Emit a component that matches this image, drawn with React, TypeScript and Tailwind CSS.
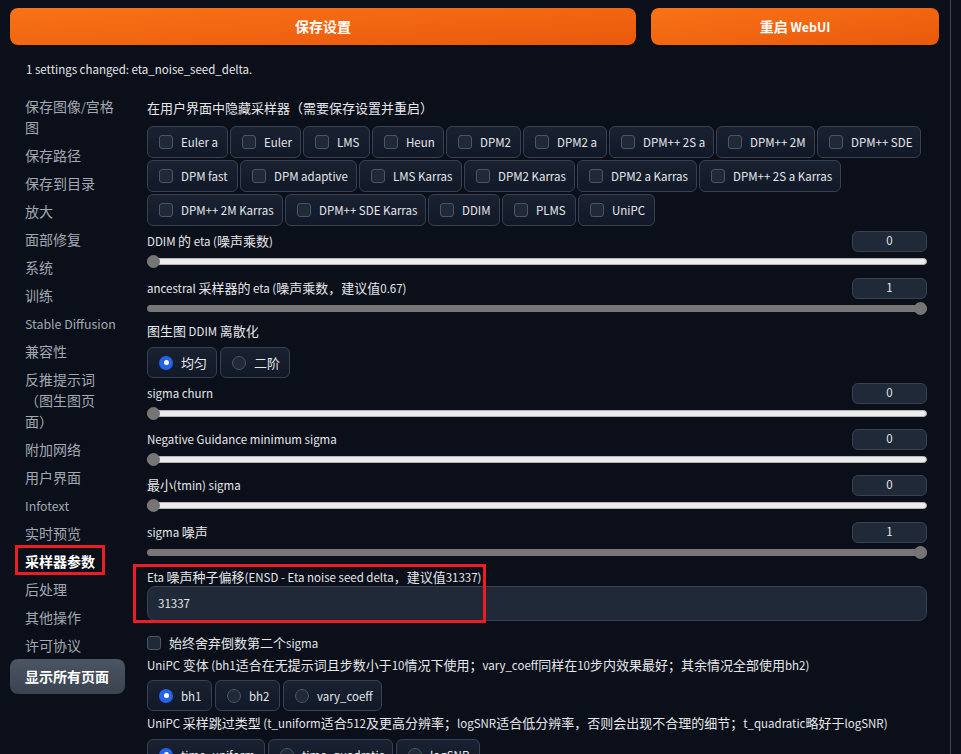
import { ReactNode } from "react";

const sidebarItems = [
  "保存图像/宫格图",
  "保存路径",
  "保存到目录",
  "放大",
  "面部修复",
  "系统",
  "训练",
  "Stable Diffusion",
  "兼容性",
  "反推提示词（图生图页面）",
  "附加网络",
  "用户界面",
  "Infotext",
  "实时预览",
  "采样器参数",
  "后处理",
  "其他操作",
  "许可协议",
];

const samplerRows: [string, number][][] = [
  [["Euler a", 81], ["Euler", 71], ["LMS", 67], ["Heun", 72], ["DPM2", 75], ["DPM2 a", 84], ["DPM++ 2S a", 105], ["DPM++ 2M", 99], ["DPM++ SDE", 104]],
  [["DPM fast", 91], ["DPM adaptive", 117], ["LMS Karras", 103], ["DPM2 Karras", 111], ["DPM2 a Karras", 120], ["DPM++ 2S a Karras", 142]],
  [["DPM++ 2M Karras", 136], ["DPM++ SDE Karras", 141], ["DDIM", 72], ["PLMS", 74], ["UniPC", 77]],
];

const CJK = /([\u2e80-\u9fff\uff00-\uffef]+)/;

// latin glyphs of the CJK font run large, so latin runs get a smaller size
function T({ children }: { children: string }) {
  const parts = children.split(CJK).filter((p) => p !== "");
  return (
    <>
      {parts.map((p, i) =>
        CJK.test(p) ? (
          <span key={i}>{p}</span>
        ) : (
          <span key={i} className="text-[0.885em] leading-none">{p}</span>
        )
      )}
    </>
  );
}

function CheckBox() {
  return <span className="w-[14px] h-[14px] shrink-0 rounded-[3px] border border-[#4b5563] bg-[#1f2937]" />;
}

function RadioDot({ checked }: { checked?: boolean }) {
  if (checked) {
    return (
      <span className="w-[14px] h-[14px] shrink-0 rounded-full bg-[#2563eb] flex items-center justify-center">
        <span className="w-[5px] h-[5px] rounded-full bg-white" />
      </span>
    );
  }
  return <span className="w-[14px] h-[14px] shrink-0 rounded-full border border-[#4b5563] bg-[#1f2937]" />;
}

function Chip({ w, h = "h-[32px]", children }: { w: number; h?: string; children: ReactNode }) {
  return (
    <label
      className={`${h} flex items-center gap-[8px] pl-[11px] rounded-md border border-[#374151] bg-gradient-to-t from-[#111827] to-[#1a2130] text-[13px] text-[#e5e7eb] whitespace-nowrap`}
      style={{ width: w }}
    >
      {children}
    </label>
  );
}

function RadioRow({ items, selected }: { items: [string, number][]; selected: number }) {
  return (
    <div className="flex gap-[3px]">
      {items.map(([label, w], i) => (
        <Chip key={label} w={w} h="h-[31px]">
          <RadioDot checked={i === selected} />
          <span><T>{label}</T></span>
        </Chip>
      ))}
    </div>
  );
}

function Label({ text, className = "" }: { text: string; className?: string }) {
  return (
    <div className={`h-[20px] leading-[20px] text-[13px] text-[#e5e7eb] whitespace-nowrap ${className}`}>
      <T>{text}</T>
    </div>
  );
}

function SliderBlock({ label, value, full, className }: { label: string; value: string; full?: boolean; className?: string }) {
  return (
    <div className={className}>
      <div className="h-[22px] flex items-center justify-between">
        <span className="text-[13px] text-[#e5e7eb]"><T>{label}</T></span>
        <div className="w-[75px] h-[21px] rounded-md border border-[#374151] bg-[#1f2937] flex items-center justify-center text-[13px] text-[#e5e7eb]">
          <T>{value}</T>
        </div>
      </div>
      <div className="mt-[1px] h-[16px] relative flex items-center">
        {full ? (
          <div className="h-[7px] w-full rounded-full bg-[#777777]" />
        ) : (
          <div className="h-[7px] w-full rounded-full bg-[#ececec] border border-[#b5b5b5]" />
        )}
        <span
          className={`absolute top-[1.5px] w-[13px] h-[13px] rounded-full bg-[#757575] ${full ? "right-0" : "left-0"}`}
        />
      </div>
    </div>
  );
}

export default function App() {
  return (
    <div className="min-h-screen bg-[#0b0f19] font-['Noto_Sans_CJK_SC','Lato',sans-serif] [text-spacing-trim:space-all] overflow-hidden">
      <div className="w-[951px] min-h-[754px] border-r border-[#3f4654]">
        <div className="flex gap-[15px] pl-[10px] pr-[11px] pt-[8px]">
          <button className="flex-1 h-[37px] rounded-lg bg-gradient-to-br from-[#f97316] to-[#ea580c] text-white text-[14px] font-bold">
            保存设置
          </button>
          <button className="w-[288px] h-[37px] rounded-lg bg-gradient-to-br from-[#f97316] to-[#ea580c] text-white text-[14px] font-bold">
            <T>重启 WebUI</T>
          </button>
        </div>

        <Label className="mt-[14px] pl-[26px]" text="1 settings changed: eta_noise_seed_delta." />

        <div className="mt-[13px] flex gap-[22px] pl-[10px]">
          <aside className="w-[115px] shrink-0">
            {sidebarItems.map((item) => {
              const active = item === "采样器参数";
              return (
                <div
                  key={item}
                  className={`relative pl-[15px] pr-[4px] py-[3.5px] leading-[21px] text-[14px] ${active ? "text-white font-semibold" : "text-[#a3a9b3]"}`}
                >
                  <T>{item}</T>
                  {active && (
                    <span className="absolute left-[5px] top-[-2px] w-[90px] h-[30px] border-[3px] border-[#ec1c24]" />
                  )}
                </div>
              );
            })}
            <button className="w-full h-[35px] rounded-lg bg-gradient-to-b from-[#4b5563] to-[#3b4350] text-left pl-[15px] text-white text-[14px] font-bold">
              显示所有页面
            </button>
          </aside>

          <main className="w-[780px] pt-[6px]">
            <Label text="在用户界面中隐藏采样器（需要保存设置并重启）" />
            <div className="mt-[8px] flex flex-col gap-[2px]">
              {samplerRows.map((row, r) => (
                <div key={r} className="flex gap-[2px]">
                  {row.map(([label, w]) => (
                    <Chip key={label} w={w}>
                      <CheckBox />
                      <span><T>{label}</T></span>
                    </Chip>
                  ))}
                </div>
              ))}
            </div>

            <SliderBlock className="mt-[4px]" label="DDIM 的 eta (噪声乘数)" value="0" />
            <SliderBlock className="mt-[8px]" label="ancestral 采样器的 eta (噪声乘数，建议值0.67)" value="1" full />

            <Label className="mt-[5px]" text="图生图 DDIM 离散化" />
            <div className="mt-[6px]">
              <RadioRow items={[["均匀", 70], ["二阶", 70]]} selected={0} />
            </div>

            <SliderBlock className="mt-[4px]" label="sigma churn" value="0" />
            <SliderBlock className="mt-[7px]" label="Negative Guidance minimum sigma" value="0" />
            <SliderBlock className="mt-[7px]" label="最小(tmin) sigma" value="0" />
            <SliderBlock className="mt-[8px]" label="sigma 噪声" value="1" full />

            <div className="relative mt-[7px]">
              <div className="h-[19px] leading-[19px] text-[13px] text-[#e5e7eb]">
                <T>Eta 噪声种子偏移(ENSD - Eta noise seed delta，建议值31337)</T>
              </div>
              <div className="h-[35px] rounded-lg border border-[#374151] bg-[#1f2937] flex items-center pl-[10px] text-[13px] text-[#e5e7eb]">
                <T>31337</T>
              </div>
              <span className="absolute left-[-14px] top-[-3px] w-[353px] h-[59px] border-[3px] border-[#ec1c24]" />
            </div>

            <label className="mt-[12px] h-[20px] flex items-center gap-[8px] text-[13px] text-[#e5e7eb]">
              <CheckBox />
              <span><T>始终舍弃倒数第二个sigma</T></span>
            </label>

            <Label className="mt-[2px]" text="UniPC 变体 (bh1适合在无提示词且步数小于10情况下使用；vary_coeff同样在10步内效果最好；其余情况全部使用bh2)" />
            <div className="mt-[5px]">
              <RadioRow items={[["bh1", 65], ["bh2", 65], ["vary_coeff", 99]]} selected={0} />
            </div>

            <Label className="mt-[2px]" text="UniPC 采样跳过类型 (t_uniform适合512及更高分辨率；logSNR适合低分辨率，否则会出现不合理的细节；t_quadratic略好于logSNR)" />
            <div className="mt-[6px] pb-[10px]">
              <RadioRow items={[["time_uniform", 118], ["time_quadratic", 125], ["logSNR", 84]]} selected={0} />
            </div>
          </main>
        </div>
      </div>
    </div>
  );
}
